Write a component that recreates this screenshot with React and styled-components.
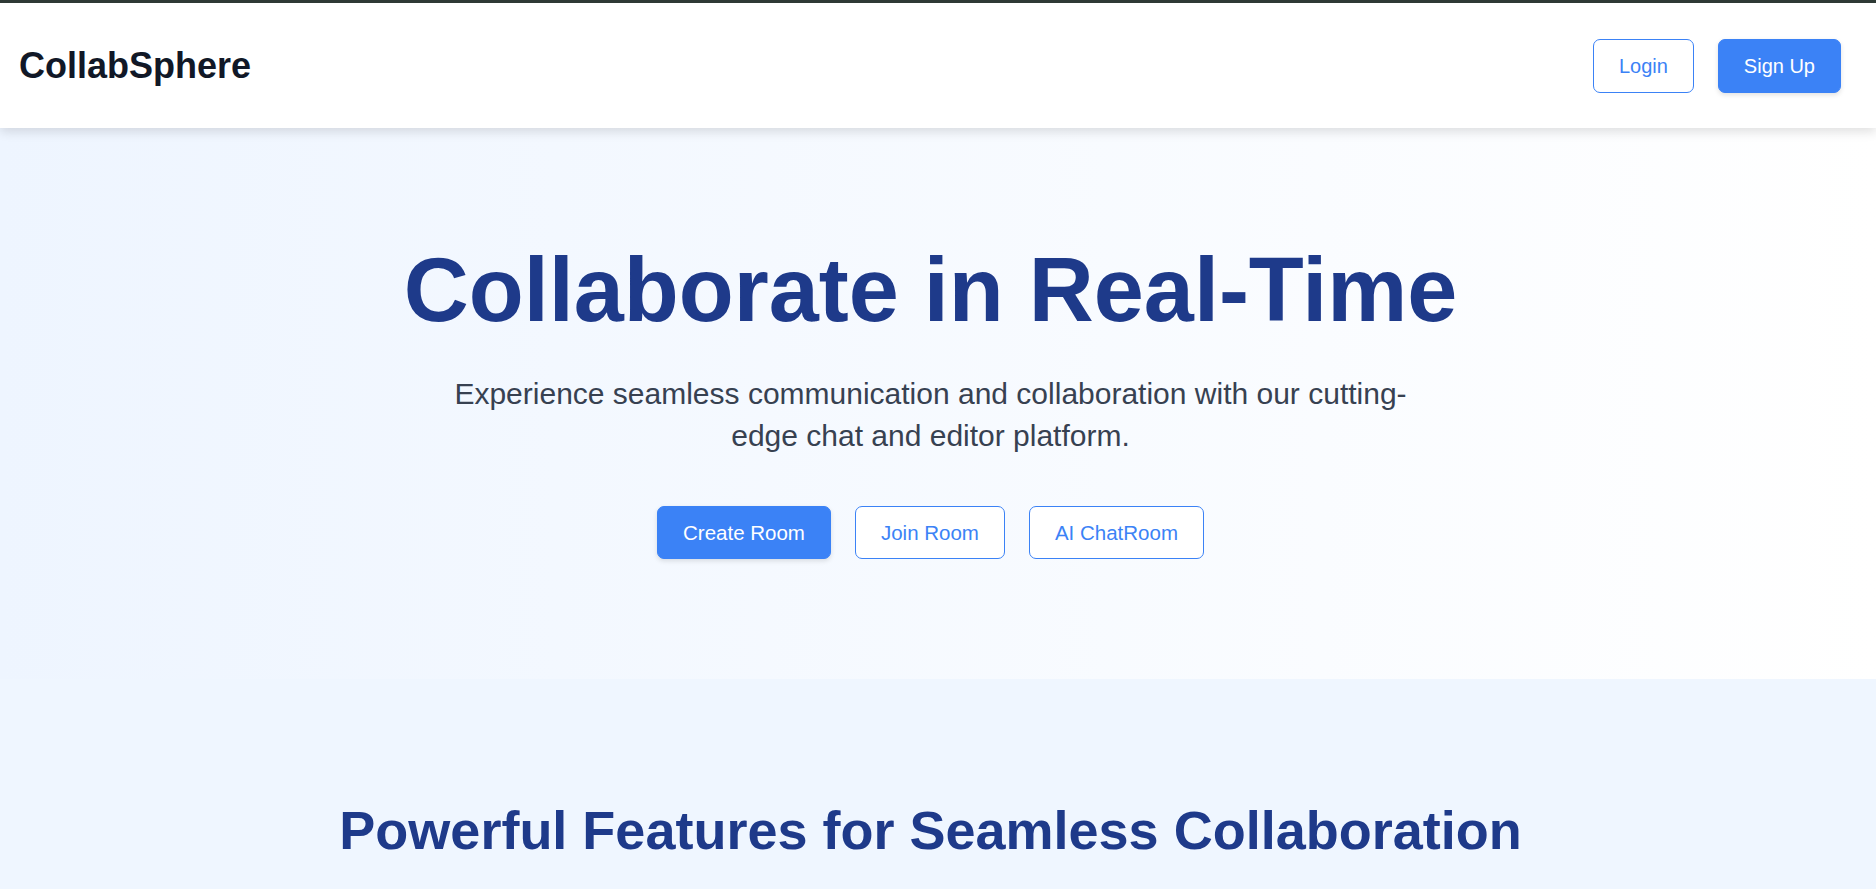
import styled, { createGlobalStyle, css } from 'styled-components';

const GlobalStyle = createGlobalStyle`
  html, body {
    margin: 0;
    padding: 0;
    overflow: hidden;
  }
  body {
    font-family: 'Liberation Sans', Arial, sans-serif;
    background: #ffffff;
    border-top: 3px solid #2e3935;
  }
  * {
    box-sizing: border-box;
  }
`;

const Page = styled.div`
  display: flex;
  flex-direction: column;
  min-height: 886px;
`;

const Header = styled.header`
  position: relative;
  z-index: 2;
  height: 125px;
  display: flex;
  align-items: center;
  justify-content: space-between;
  padding: 0 35px 0 19px;
  background: #ffffff;
  box-shadow: 0 4px 10px rgba(0, 0, 0, 0.12);
`;

const Logo = styled.h1`
  margin: 0;
  font-size: 36px;
  line-height: 1.2;
  font-weight: 700;
  color: #111827;
`;

const Nav = styled.nav`
  display: flex;
  align-items: center;
  gap: 24px;
`;

const Button = styled.button`
  font-family: inherit;
  font-size: ${({ $size }) => ($size === 'lg' ? '20.5px' : '20px')};
  line-height: 24px;
  padding: ${({ $size }) => ($size === 'lg' ? '13.5px 25px' : '14px 25px')};
  border-radius: 7px;
  border: 1px solid #3b82f6;
  cursor: pointer;
  white-space: nowrap;
  ${({ $variant }) =>
    $variant === 'solid'
      ? css`
          background: #3b82f6;
          color: #ffffff;
          box-shadow: 0 2px 5px rgba(0, 0, 0, 0.12);
        `
      : css`
          background: #ffffff;
          color: #3b82f6;
        `}
`;

const Hero = styled.section`
  display: flex;
  flex-direction: column;
  align-items: center;
  padding: 113px 15px 120px 0;
  background: linear-gradient(to right, #eef5ff, #ffffff);
  text-align: center;
`;

const Title = styled.h2`
  margin: 0;
  font-size: 90px;
  line-height: 1.1;
  font-weight: 700;
  color: #1e3a8a;
`;

const Subtitle = styled.p`
  margin: 33px 0 0;
  max-width: 980px;
  font-size: 30px;
  line-height: 42px;
  color: #374151;
`;

const Actions = styled.div`
  display: flex;
  gap: 24px;
  margin-top: 49px;
`;

const Features = styled.section`
  flex: 1;
  display: flex;
  flex-direction: column;
  align-items: center;
  padding: 119px 15px 40px 0;
  background: #eff6ff;
`;

const SectionTitle = styled.h2`
  margin: 0;
  font-size: 54px;
  line-height: 1.2;
  font-weight: 700;
  color: #1e3a8a;
  text-align: center;
`;

export default function App() {
  return (
    <Page>
      <GlobalStyle />
      <Header>
        <Logo>CollabSphere</Logo>
        <Nav>
          <Button>Login</Button>
          <Button $variant="solid">Sign Up</Button>
        </Nav>
      </Header>
      <Hero>
        <Title>Collaborate in Real-Time</Title>
        <Subtitle>
          Experience seamless communication and collaboration with our
          cutting-edge chat and editor platform.
        </Subtitle>
        <Actions>
          <Button $variant="solid" $size="lg">Create Room</Button>
          <Button $size="lg">Join Room</Button>
          <Button $size="lg">AI ChatRoom</Button>
        </Actions>
      </Hero>
      <Features>
        <SectionTitle>Powerful Features for Seamless Collaboration</SectionTitle>
      </Features>
    </Page>
  );
}
